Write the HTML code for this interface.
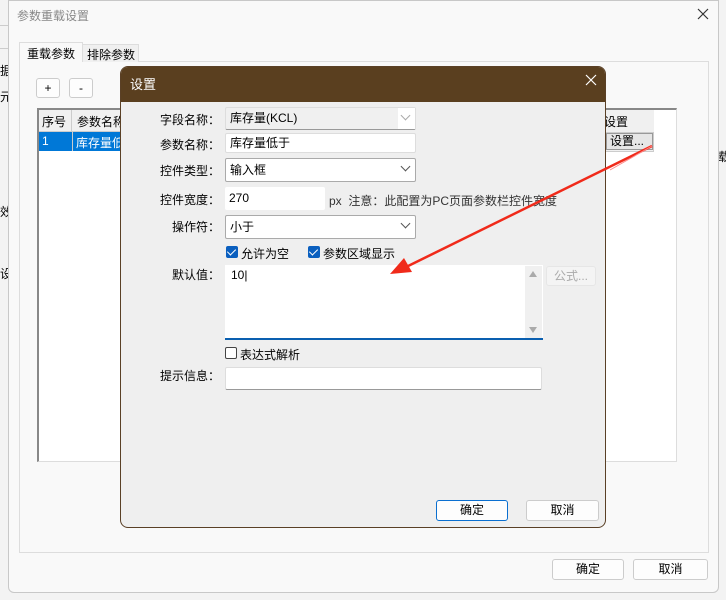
<!DOCTYPE html>
<html><head><meta charset="utf-8"><style>
*{box-sizing:border-box;margin:0;padding:0}
body{width:726px;height:600px;overflow:hidden;background:#f3f3f3;font-family:"Liberation Sans","Noto Sans CJK SC",sans-serif;font-size:12px;color:#000;position:relative;white-space:nowrap}
.a{position:absolute}
.btn{position:absolute;background:#fdfdfd;border:1px solid #ccc;border-radius:3px;text-align:center;line-height:18px;font-size:12px}
.inp{position:absolute;background:#fff;border:1px solid #ddd;border-bottom:1px solid #999;border-radius:2px;padding-left:4px;line-height:20px;font-size:12px}
.lbl{position:absolute;width:100px;text-align:right;left:120px;font-size:12px}
.chev{position:absolute;right:6px;top:4px;width:7px;height:7px;border-right:1px solid #555;border-bottom:1px solid #555;transform:rotate(45deg)}
.cb{position:absolute;width:12px;height:12px;border-radius:2px;background:#0a5fbf}
.cb:after{content:"";position:absolute;left:3px;top:1px;width:4px;height:7px;border-right:1.5px solid #fff;border-bottom:1.5px solid #fff;transform:rotate(45deg)}
</style></head><body>
<div class="a" style="left:0;top:25px;width:8px;height:1px;background:#ccc"></div>
<div class="a" style="left:0;top:48px;width:8px;height:1px;background:#ccc"></div>
<div class="a" style="left:0;top:62px;font-size:12px">据</div>
<div class="a" style="left:0;top:88px;font-size:12px">元</div>
<div class="a" style="left:0;top:203px">效</div>
<div class="a" style="left:0;top:265px">设</div>
<div class="a" style="left:718px;top:148px">载</div>
<div class="a" style="left:8px;top:0;width:711px;height:593px;background:#f9f9f9;border:1px solid #c8c8c8;border-radius:0 0 6px 6px"></div>
<div class="a" style="left:17px;top:7px;color:#888;font-size:12px">参数重载设置</div>
<svg class="a" style="left:697px;top:8px" width="12" height="12"><path d="M1 1L11 11M11 1L1 11" stroke="#333" stroke-width="1.2"/></svg>
<div class="a" style="left:19px;top:61px;width:690px;height:492px;border:1px solid #ddd;background:#f9f9f9"></div>
<div class="a" style="left:19px;top:42px;width:64px;height:20px;background:#f9f9f9;border:1px solid #ddd;border-bottom:none;padding:2px 7px">重载参数</div>
<div class="a" style="left:82px;top:44px;width:57px;height:18px;background:#f0f0f0;border:1px solid #ddd;border-bottom:none;padding:1px 4px">排除参数</div>
<div class="btn" style="left:36px;top:78px;width:24px;height:20px">+</div>
<div class="btn" style="left:69px;top:78px;width:24px;height:20px">-</div>
<div class="a" style="left:37px;top:108px;width:640px;height:354px;background:#fff;border:1px solid #ddd;border-top:2px solid #888;border-left:2px solid #888"></div>
<div class="a" style="left:39px;top:110px;width:33px;height:22px;background:#f0f0f0;border-right:1px solid #ccc;border-bottom:1px solid #ccc;padding:3px 3px">序号</div>
<div class="a" style="left:72px;top:110px;width:60px;height:22px;background:#f0f0f0;border-bottom:1px solid #ccc;padding:3px 5px">参数名称</div>
<div class="a" style="left:39px;top:132px;width:85px;height:19px;background:#0078d7;color:#fff"></div>
<div class="a" style="left:42px;top:134px;color:#fff">1</div>
<div class="a" style="left:72px;top:132px;width:1px;height:19px;background:#ccc"></div>
<div class="a" style="left:76px;top:134px;color:#fff">库存量低</div>
<div class="a" style="left:600px;top:110px;width:54px;height:22px;background:#f0f0f0;padding:3px 4px">设置</div>
<div class="a" style="left:600px;top:132px;width:54px;height:20px;background:#f0f0f0;border:1px solid #ccc"></div>
<div class="a" style="left:606px;top:133px;width:47px;height:17px;background:#e6e6e6;border:1px solid #999;padding:0 3px;line-height:15px">设置...</div>
<div class="btn" style="left:552px;top:559px;width:72px;height:21px;line-height:19px">确定</div>
<div class="btn" style="left:633px;top:559px;width:75px;height:21px;line-height:19px">取消</div>
<div class="a" style="left:120px;top:66px;width:486px;height:462px;background:#efefef;border:1px solid #5a4026;border-radius:8px;overflow:hidden">
<div style="height:35px;background:#5a3f1f;color:#fff;font-size:13px;padding:7px 9px">设置</div>
</div>
<svg class="a" style="left:585px;top:74px" width="12" height="12"><path d="M1 1L11 11M11 1L1 11" stroke="#fff" stroke-width="1.2"/></svg>
<div class="lbl" style="top:111px">字段名称：</div>
<div class="inp" style="left:225px;top:107px;width:191px;height:23px;background:#f0f0f0;line-height:21px">库存量(KCL)<div class="a" style="right:0;top:0;width:17px;height:21px;background:#fff"></div><div class="chev" style="border-color:#aaa"></div></div>
<div class="lbl" style="top:136px">参数名称：</div>
<div class="inp" style="left:225px;top:133px;width:191px;height:20px;border-bottom-color:#ddd;line-height:18px">库存量低于</div>
<div class="lbl" style="top:162px">控件类型：</div>
<div class="inp" style="left:225px;top:158px;width:191px;height:24px;border-color:#aaa;line-height:22px">输入框<div class="chev"></div></div>
<div class="lbl" style="top:191px">控件宽度：</div>
<div class="inp" style="left:225px;top:187px;width:100px;height:23px;border:none;line-height:22px">270</div>
<div class="a" style="left:329px;top:192px;color:#333">px &nbsp;注意：此配置为PC页面参数栏控件宽度</div>
<div class="lbl" style="top:218px">操作符：</div>
<div class="inp" style="left:225px;top:215px;width:191px;height:24px;border-color:#aaa;line-height:22px">小于<div class="chev"></div></div>
<div class="cb" style="left:226px;top:246px"></div><div class="a" style="left:241px;top:245px">允许为空</div>
<div class="cb" style="left:308px;top:246px"></div><div class="a" style="left:323px;top:245px">参数区域显示</div>
<div class="lbl" style="top:266px">默认值：</div>
<div class="a" style="left:225px;top:265px;width:318px;height:75px;background:#fff;border-bottom:2px solid #0a5fb0"></div>
<div class="a" style="left:525px;top:266px;width:17px;height:72px;background:#f0f0f0"></div>
<div class="a" style="left:529px;top:271px;width:0;height:0;border-left:4px solid transparent;border-right:4px solid transparent;border-bottom:6px solid #aaa"></div>
<div class="a" style="left:529px;top:327px;width:0;height:0;border-left:4px solid transparent;border-right:4px solid transparent;border-top:6px solid #aaa"></div>
<div class="a" style="left:231px;top:268px">10|</div>
<div class="btn" style="left:546px;top:266px;width:50px;height:20px;color:#aaa;border-color:#e6e6e6;background:#f4f4f4">公式...</div>
<div class="a" style="left:225px;top:347px;width:12px;height:12px;border:1px solid #444;border-radius:2px;background:#fff"></div>
<div class="a" style="left:240px;top:346px">表达式解析</div>
<div class="lbl" style="top:367px">提示信息：</div>
<div class="inp" style="left:225px;top:367px;width:317px;height:23px;border-color:#ddd;border-bottom-color:#999"></div>
<div class="btn" style="left:436px;top:500px;width:72px;height:21px;border:1px solid #0a6fd0">确定</div>
<div class="btn" style="left:526px;top:500px;width:73px;height:21px">取消</div>
<svg class="a" style="left:0;top:0" width="726" height="600">
<line x1="652" y1="146" x2="400" y2="270" stroke="#f02a1a" stroke-width="2.5"/>
<line x1="652" y1="146" x2="610" y2="170" stroke="#f88" stroke-width="1"/>
<polygon points="390,274 404,258 412,272" fill="#f02a1a"/>
</svg>
</body></html>
